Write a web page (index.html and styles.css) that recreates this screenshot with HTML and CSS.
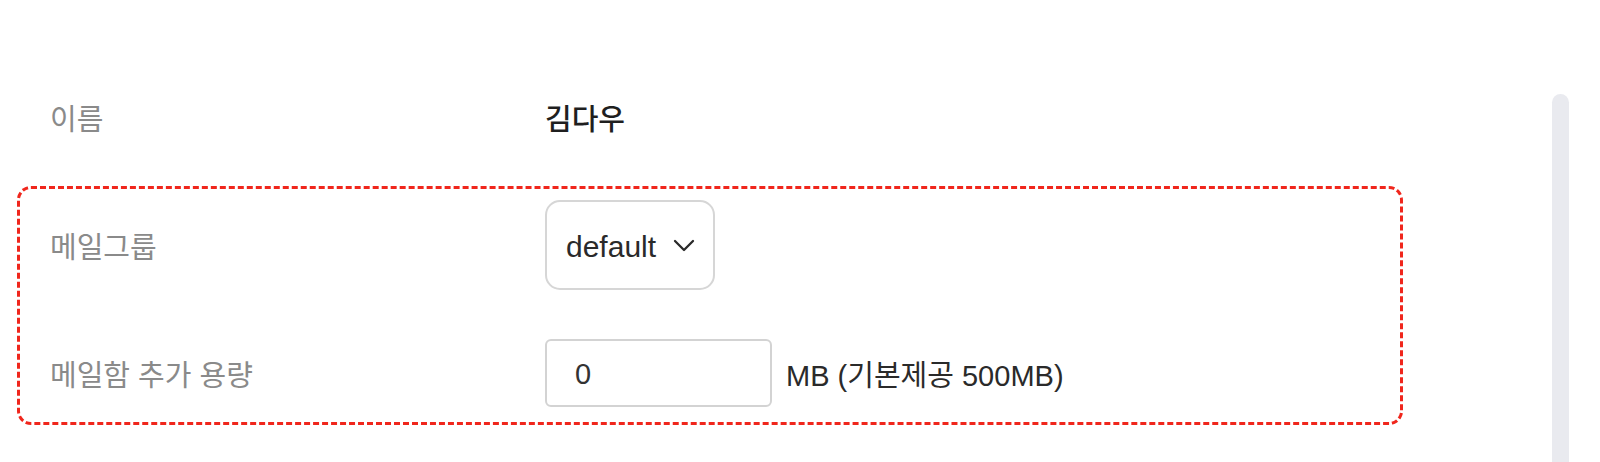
FILE: index.html
```html
<!DOCTYPE html>
<html lang="ko">
<head>
<meta charset="utf-8">
<title>메일 설정</title>
<link rel="stylesheet" href="styles.css">
</head>
<body>
<div class="page">
  <main class="main">
    <div class="row row-name">
      <div class="label">이름</div>
      <div class="value name">김다우</div>
    </div>
    <section class="group">
      <div class="row row-select">
        <div class="label">메일그룹</div>
        <div class="value">
          <div class="select">
            <span class="select-text">default</span>
            <svg class="chev" width="22" height="13" viewBox="0 0 22 13"><path d="M2 2 L11 11 L20 2" fill="none" stroke="#2a2a2a" stroke-width="2.3" stroke-linecap="round" stroke-linejoin="round"/></svg>
          </div>
        </div>
      </div>
      <div class="row row-input">
        <div class="label">메일함 추가 용량</div>
        <div class="value inline">
          <div class="input"><span>0</span></div>
          <span class="unit">MB (기본제공 500MB)</span>
        </div>
      </div>
    </section>
  </main>
  <div class="track"></div>
</div>
</body>
</html>
```

FILE: styles.css
```css
html, body {
  margin: 0;
  padding: 0;
  background: #ffffff;
}
body {
  font-family: "Liberation Sans", "Noto Sans CJK KR", sans-serif;
  font-size: 29px;
  color: #222;
}
.page {
  display: flex;
  width: 1600px;
  height: 462px;
  overflow: hidden;
}
.main {
  width: 1410px;
}
.row {
  display: grid;
  grid-template-columns: 495px 1fr;
  align-items: center;
}
.row-name {
  margin-top: 87px;
  height: 60px;
  padding-left: 50px;
}
.label {
  color: #8a8a8a;
  white-space: nowrap;
}
.name {
  color: #1f1f1f;
  font-weight: 500;
}
.group {
  box-sizing: border-box;
  margin-top: 39px;
  margin-left: 17px;
  width: 1386px;
  height: 239px;
  border: 3px dashed #f0261c;
  border-radius: 14px;
  padding: 11px 0 0 30px;
}
.row-select {
  height: 90px;
}
.row-input {
  margin-top: 49px;
  height: 68px;
}
.select {
  box-sizing: border-box;
  width: 170px;
  height: 90px;
  border: 2px solid #d6d6d6;
  border-radius: 15px;
  display: flex;
  align-items: center;
  padding-left: 19px;
  padding-top: 3px;
  gap: 17px;
  color: #2a2a2a;
}
.select-text {
  font-size: 30px;
}
.chev {
  display: block;
  margin-top: -3px;
}
.inline {
  display: flex;
  align-items: center;
  gap: 14px;
}
.input {
  box-sizing: border-box;
  width: 227px;
  height: 68px;
  border: 2px solid #d3d3d3;
  border-radius: 6px;
  display: flex;
  align-items: center;
  padding-left: 28px;
  padding-top: 3px;
  color: #333;
}
.unit {
  color: #2a2a2a;
  white-space: nowrap;
}
.track {
  margin-top: 94px;
  margin-left: 142px;
  width: 17px;
  height: 400px;
  background: #e9eaef;
  border-radius: 9px 9px 0 0;
}
```
